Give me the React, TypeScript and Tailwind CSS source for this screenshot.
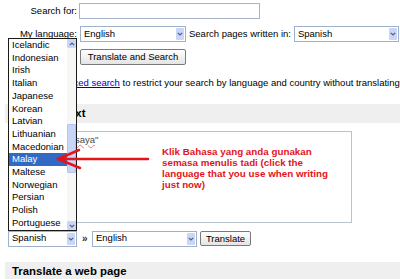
import React from "react";

const LANGS = [
  "Icelandic",
  "Indonesian",
  "Irish",
  "Italian",
  "Japanese",
  "Korean",
  "Latvian",
  "Lithuanian",
  "Macedonian",
  "Malay",
  "Maltese",
  "Norwegian",
  "Persian",
  "Polish",
  "Portuguese",
];

function Chevron({ up = false }: { up?: boolean }) {
  return (
    <svg width="6" height="4" viewBox="0 0 6 4" className={up ? "rotate-180" : ""}>
      <path d="M0.8 0.8 L3 3 L5.2 0.8" fill="none" stroke="#4d6185" strokeWidth="1.2" />
    </svg>
  );
}

function Select({ value, className = "" }: { value: string; className?: string }) {
  return (
    <div className={"flex h-[16px] items-center border border-[#9fb1c8] bg-white " + className}>
      <span className="flex-1 truncate pl-[3px]">{value}</span>
      <span className="mr-[1px] flex h-[12px] w-[8px] items-center justify-center rounded-[1px] bg-[#c9d6f6]">
        <Chevron />
      </span>
    </div>
  );
}

function LanguageList() {
  return (
    <div className="absolute left-[8px] top-[38px] z-10 flex h-[193px] w-[69px] border border-[#1a1a1a] bg-white">
      <ul className="flex-1">
        {LANGS.map((l) => (
          <li
            key={l}
            className={
              "pl-[3px] leading-[12.7px] " +
              (l === "Malay" ? "bg-[#316ac5] text-white" : "")
            }
          >
            {l}
          </li>
        ))}
      </ul>
      {/* scrollbar */}
      <div className="flex w-[9px] flex-col bg-[#f7f7f5]">
        <span className="flex h-[9px] items-center justify-center rounded-[1px] bg-[#c9d6f6]">
          <Chevron up />
        </span>
        <span className="h-[76px]" />
        <span className="h-[49px] rounded-[1px] border border-[#b5c4ec] bg-[#c8d5f7]" />
        <span className="flex-1" />
        <span className="flex h-[9px] items-center justify-center rounded-[1px] bg-[#c9d6f6]">
          <Chevron />
        </span>
      </div>
    </div>
  );
}

export default function App() {
  return (
    <div className="relative h-[279px] w-[400px] overflow-hidden bg-white font-['Liberation_Sans',Arial,sans-serif] text-[9.5px] text-black">
      <div className="pt-[3px]">
        <div className="flex h-[16px] items-center">
          <span className="w-[77px] text-right">Search for:</span>
          <div className="ml-[2px] h-[16px] w-[181px] border border-[#a5b4c6] bg-white" />
        </div>

        <div className="mt-[7px] flex h-[16px] items-center">
          <span className="w-[77px] text-right">My language:</span>
          <Select value="English" className="ml-[3px] w-[106px]" />
          <span className="ml-[3px] whitespace-nowrap">Search pages written in:</span>
          <Select value="Spanish" className="ml-[3px] w-[105px]" />
        </div>

        <div className="mt-[7px] pl-[80px]">
          <button className="h-[16px] w-[106px] rounded-[2px] border border-[#7a7a7a] bg-gradient-to-b from-white to-[#e4e4e4] leading-none">
            Translate and Search
          </button>
        </div>

        <p className="mt-[12px] whitespace-nowrap pl-[28px] leading-[12px]">
          Use <a className="text-[#0000cc] underline">advanced search</a> to restrict your search by language and country without translating
        </p>

        <div className="ml-[5px] mt-[15px] flex h-[19px] items-center bg-[#efefef] pl-[7px] text-[11.4px] font-bold">
          Translate text
        </div>

        <div className="ml-[8px] mt-[8px] h-[92px] w-[344px] border border-[#b7c3cf] pl-[4px] pt-[2px] leading-[12px] text-[#4a4a4a]">
          "Terima kasih,{" "}
          <span className="underline decoration-[#e77] decoration-wavy">saya</span>"
        </div>

        <div className="ml-[8px] mt-[8px] flex h-[15px] items-center">
          <Select value="Spanish" className="w-[69px]" />
          <span className="ml-[5px] w-[10px] text-[10px] font-bold text-[#333]">»</span>
          <Select value="English" className="ml-[0px] w-[105px]" />
          <button className="ml-[3px] h-[15px] w-[51px] rounded-[2px] border border-[#7a7a7a] bg-gradient-to-b from-white to-[#e4e4e4] leading-none">
            Translate
          </button>
        </div>

        <div className="ml-[5px] mt-[16px] flex h-[19px] items-center bg-[#efefef] pl-[7px] text-[11.4px] font-bold">
          Translate a web page
        </div>
      </div>

      <LanguageList />

      {/* annotation */}
      <svg className="absolute left-[50px] top-[145px] z-20" width="105" height="30" viewBox="0 0 105 30">
        <g fill="none" stroke="#e3141b" strokeWidth="2.5" strokeLinecap="round">
          <path d="M98 14 L9 14" />
          <path d="M8 14 L29 5" />
          <path d="M8 14 L30 23" />
        </g>
      </svg>
      <p className="absolute left-[162px] top-[146px] z-20 whitespace-nowrap text-[9.8px] font-bold leading-[11.1px] text-[#e3141b]">
        Klik Bahasa yang anda gunakan
        <br />
        semasa menulis tadi (click the
        <br />
        language that you use when writing
        <br />
        just now)
      </p>
    </div>
  );
}
